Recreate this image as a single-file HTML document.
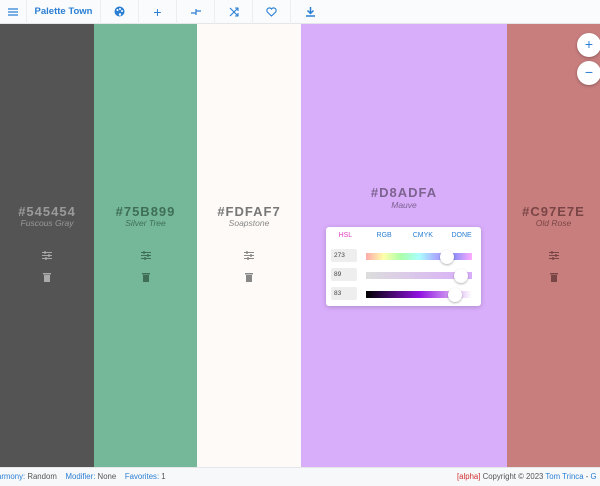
<!DOCTYPE html>
<html><head><style>
*{margin:0;padding:0;box-sizing:border-box}
body{width:600px;height:486px;overflow:hidden;font-family:"Liberation Sans",sans-serif;position:relative;background:#fff}
.hdr{position:absolute;top:0;left:0;width:600px;height:24px;background:#fafbfc;border-bottom:1px solid #e4e6e8;display:flex;align-items:center}
.hdr .it{height:24px;display:flex;align-items:center;justify-content:center;border-right:1px solid #eceef0;color:#2a7fd4}
.col{position:absolute;top:24px;height:443px}
.hex{position:absolute;width:100%;text-align:center;font-size:13px;letter-spacing:1px;font-weight:bold;-webkit-text-stroke:0}
.nm{position:absolute;width:100%;text-align:center;font-size:8.5px;font-style:italic}
.ic{position:absolute;left:50%;transform:translateX(-50%)}
.ftr{position:absolute;top:467px;left:0;width:600px;height:19px;background:#f7f8f9;border-top:1px solid #e4e6e8;font-size:7.8px;color:#555;line-height:18px}
.b{color:#2a7fd4}
.zb{position:absolute;left:577px;width:24px;height:24px;border-radius:50%;background:#fff;box-shadow:0 1px 3px rgba(0,0,0,.3);color:#2a7fd4;text-align:center;line-height:23px;font-size:14px}
</style></head><body>
<div class="hdr">
<div class="it" style="width:27px"><svg width="10" height="8"><path d="M0 1h10M0 4h10M0 7h10" stroke="#2a7fd4" stroke-width="1.2"/></svg></div>
<div class="it" style="width:74px;font-weight:bold;font-size:9.5px">Palette Town</div>
<div class="it" style="width:38px"><svg width="11" height="11"><circle cx="5.5" cy="5.5" r="5" fill="#2a7fd4"/><circle cx="3.5" cy="4" r="1" fill="#fff"/><circle cx="6" cy="3" r="1" fill="#fff"/><circle cx="8" cy="5" r="1" fill="#fff"/><circle cx="6" cy="8.5" r="1.2" fill="#fff"/></svg></div>
<div class="it" style="width:38px;font-size:14px">+</div>
<div class="it" style="width:38px"><svg width="12" height="8"><path d="M1 5h5M6 3h5M6 1v6" stroke="#2a7fd4" stroke-width="1.2" fill="none"/></svg></div>
<div class="it" style="width:38px"><svg width="10" height="10"><path d="M1 1l8 8M9 1L1 9M6 1h3v3M6 9h3V6" stroke="#2a7fd4" stroke-width="1.1" fill="none"/></svg></div>
<div class="it" style="width:38px"><svg width="11" height="10"><path d="M5.5 9L1.3 5A2.3 2.3 0 0 1 5.5 2a2.3 2.3 0 0 1 4.2 3z" stroke="#2a7fd4" stroke-width="1.1" fill="none"/></svg></div>
<div class="it" style="width:38px;border:none"><svg width="9" height="10"><path d="M4.5 0v6M1.5 3.5l3 3 3-3M0 9h9" stroke="#2a7fd4" stroke-width="1.5" fill="none"/></svg></div>
</div>

<div class="col" style="left:0;width:94px;background:#545454">
<div class="hex" style="top:180px;color:#9a9a9a">#545454</div><div class="nm" style="top:194px;color:#999">Fuscous Gray</div>
<svg class="ic" style="top:227px" width="10" height="9"><path d="M0 1.5h10M0 4.5h10M0 7.5h10" stroke="#a8a8a8" stroke-width="1"/><path d="M3 0v3M7 3v3M4 6v3" stroke="#a8a8a8" stroke-width="1.4"/></svg>
<svg class="ic" style="top:248px" width="8" height="10"><rect x="0" y="1" width="8" height="1.5" fill="#aaa"/><rect x="1" y="3" width="6" height="7" fill="#aaa"/></svg>
</div>
<div class="col" style="left:94px;width:103px;background:#75b899">
<div class="hex" style="top:180px;color:#3f6e58">#75B899</div><div class="nm" style="top:194px;color:#3f6e58">Silver Tree</div>
<svg class="ic" style="top:227px" width="10" height="9"><path d="M0 1.5h10M0 4.5h10M0 7.5h10" stroke="#3f6e58" stroke-width="1"/><path d="M3 0v3M7 3v3M4 6v3" stroke="#3f6e58" stroke-width="1.4"/></svg>
<svg class="ic" style="top:248px" width="8" height="10"><rect x="0" y="1" width="8" height="1.5" fill="#3f6e58"/><rect x="1" y="3" width="6" height="7" fill="#3f6e58"/></svg>
</div>
<div class="col" style="left:197px;width:104px;background:#fdfaf7">
<div class="hex" style="top:180px;color:#777">#FDFAF7</div><div class="nm" style="top:194px;color:#888">Soapstone</div>
<svg class="ic" style="top:227px" width="10" height="9"><path d="M0 1.5h10M0 4.5h10M0 7.5h10" stroke="#888" stroke-width="1"/><path d="M3 0v3M7 3v3M4 6v3" stroke="#888" stroke-width="1.4"/></svg>
<svg class="ic" style="top:248px" width="8" height="10"><rect x="0" y="1" width="8" height="1.5" fill="#888"/><rect x="1" y="3" width="6" height="7" fill="#888"/></svg>
</div>
<div class="col" style="left:301px;width:206px;background:#d8adfa">
<div class="hex" style="top:161px;color:#7d6390">#D8ADFA</div><div class="nm" style="top:176px;color:#7d6390">Mauve</div>
<div style="position:absolute;left:25px;top:203px;width:155px;height:79px;background:#fff;border-radius:3px;box-shadow:0 1px 5px rgba(0,0,0,.2);font-size:7px">
<div style="display:flex;height:18px;line-height:18px;text-align:center"><div style="flex:1;color:#e040c0">HSL</div><div style="flex:1;color:#2a7fd4">RGB</div><div style="flex:1;color:#2a7fd4">CMYK</div><div style="flex:1;color:#2a7fd4">DONE</div></div>
<div style="position:absolute;left:5px;top:22px;width:26px;height:13px;background:#eee;border-radius:2px;line-height:13px;padding-left:3px;font-size:6.5px;color:#444">273</div>
<div style="position:absolute;left:40px;top:26px;width:106px;height:7px;background:linear-gradient(90deg,#faa,#ffa,#afa,#aff,#aaf,#8f8ffa,#faf)"></div>
<div style="position:absolute;left:114px;top:23px;width:14px;height:14px;border-radius:50%;background:#fff;box-shadow:0 1px 2px rgba(0,0,0,.3)"></div>
<div style="position:absolute;left:5px;top:41px;width:26px;height:13px;background:#eee;border-radius:2px;line-height:13px;padding-left:3px;font-size:6.5px;color:#444">89</div>
<div style="position:absolute;left:40px;top:45px;width:106px;height:7px;background:linear-gradient(90deg,#ddd,#d8adfa)"></div>
<div style="position:absolute;left:128px;top:42px;width:14px;height:14px;border-radius:50%;background:#fff;box-shadow:0 1px 2px rgba(0,0,0,.3)"></div>
<div style="position:absolute;left:5px;top:60px;width:26px;height:13px;background:#eee;border-radius:2px;line-height:13px;padding-left:3px;font-size:6.5px;color:#444">83</div>
<div style="position:absolute;left:40px;top:64px;width:106px;height:7px;background:linear-gradient(90deg,#000,#9010e0 50%,#fff)"></div>
<div style="position:absolute;left:122px;top:61px;width:14px;height:14px;border-radius:50%;background:#fff;box-shadow:0 1px 2px rgba(0,0,0,.3)"></div>
</div>
</div>
<div class="col" style="left:507px;width:93px;background:#c97e7e">
<div class="hex" style="top:180px;color:#7a4545">#C97E7E</div><div class="nm" style="top:194px;color:#7a4545">Old Rose</div>
<svg class="ic" style="top:227px" width="10" height="9"><path d="M0 1.5h10M0 4.5h10M0 7.5h10" stroke="#7a4545" stroke-width="1"/><path d="M3 0v3M7 3v3M4 6v3" stroke="#7a4545" stroke-width="1.4"/></svg>
<svg class="ic" style="top:248px" width="8" height="10"><rect x="0" y="1" width="8" height="1.5" fill="#7a4545"/><rect x="1" y="3" width="6" height="7" fill="#7a4545"/></svg>
</div>
<div class="zb" style="top:33px">+</div>
<div class="zb" style="top:61px">−</div>
<div class="ftr"><span style="position:absolute;left:-3px"><span class="b">armony:</span> Random &nbsp;&nbsp; <span class="b">Modifier:</span> None &nbsp;&nbsp; <span class="b">Favorites:</span> 1</span>
<span style="position:absolute;left:457px;white-space:nowrap"><span style="color:#d03030">[alpha]</span> Copyright © 2023 <span class="b">Tom Trinca</span> - <span class="b">G</span></span></div>
</body></html>
